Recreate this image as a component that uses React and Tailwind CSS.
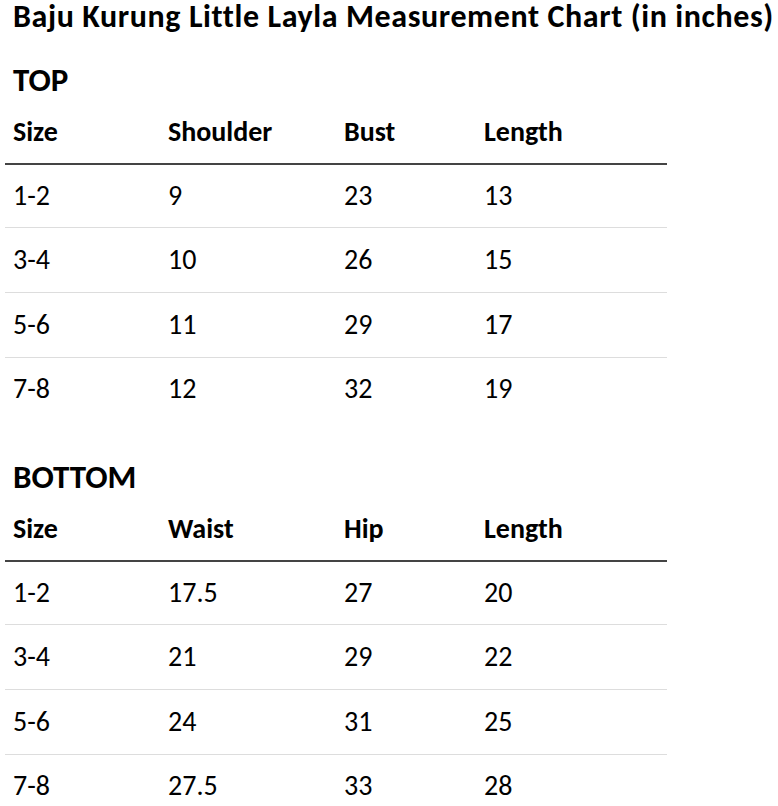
import React from 'react';

const top = {
    title: 'TOP',
    cols: ['Size', 'Shoulder', 'Bust', 'Length'],
    rows: [
        ['1-2', '9', '23', '13'],
        ['3-4', '10', '26', '15'],
        ['5-6', '11', '29', '17'],
        ['7-8', '12', '32', '19'],
    ],
};

const bottom = {
    title: 'BOTTOM',
    cols: ['Size', 'Waist', 'Hip', 'Length'],
    rows: [
        ['1-2', '17.5', '27', '20'],
        ['3-4', '21', '29', '22'],
        ['5-6', '24', '31', '25'],
        ['7-8', '27.5', '33', '28'],
    ],
};

const widths = ['w-[155px]', 'w-[176px]', 'w-[140px]', 'w-[191px]'];

// first row sits a little tighter under the thick header rule
const rowClass = (i, n) => {
    if (i === n - 1) return 'h-[64px]';
    if (i === 0) return 'h-[63px] border-b border-[#ddd]';
    return 'h-[65px] border-b border-[#ddd]';
};

function SizeTable({ data, className }) {
    return (
        <div className={className}>
            <h3 className="pl-2 text-[33px] font-bold leading-[40px]">{data.title}</h3>
            <table className="border-collapse table-fixed w-[662px] text-[28px]">
                <colgroup>
                    {widths.map((w, i) => <col key={i} className={w} />)}
                </colgroup>
                <thead>
                    <tr className="h-[64px] border-b-2 border-[#444]">
                        {data.cols.map((c) => (
                            <th key={c} className="px-2 text-left font-bold align-middle leading-none">{c}</th>
                        ))}
                    </tr>
                </thead>
                <tbody>
                    {data.rows.map((r, i) => (
                        <tr key={i} className={rowClass(i, data.rows.length)}>
                            {r.map((v, j) => (
                                <td key={j} className="px-2 align-middle leading-none">{v}</td>
                            ))}
                        </tr>
                    ))}
                </tbody>
            </table>
        </div>
    );
}

export default function App() {
    return (
        <div className="min-h-screen bg-white pl-[5px] text-black font-['Carlito','Open_Sans',sans-serif]">
            <h1 className="pl-2 text-[32px] font-bold leading-[34px] tracking-[0.6px] whitespace-nowrap">
                Baju Kurung Little Layla Measurement Chart (in inches)
            </h1>
            <SizeTable data={top} className="mt-[26px]" />
            <SizeTable data={bottom} className="mt-[36px]" />
        </div>
    );
}
